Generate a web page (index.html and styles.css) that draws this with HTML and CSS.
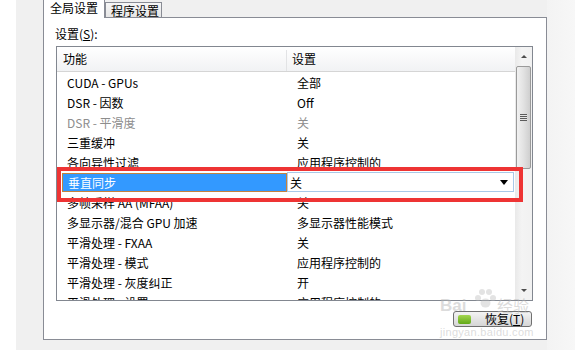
FILE: index.html
```html
<!DOCTYPE html>
<html>
    <head>
        <title>NVIDIA 控制面板 - 管理 3D 设置</title>
        <link rel="stylesheet" href="styles.css">
    </head>
    <body>
        <div class="screen">
            <div class="edge"></div>
            <div class="window">
                <div class="dialog">
                    <div class="tabs">
                        <div class="tab tab-on">全局设置</div>
                        <div class="tab tab-off">程序设置</div>
                    </div>
                    <div class="panel">
                        <p class="label">设置(<u>S</u>):</p>
                        <div class="listbox">
                            <div class="grid">
                                <div class="head">
                                    <div class="c1">功能</div>
                                    <div class="c2">设置</div>
                                </div>
                                <div class="row"><div class="c1">CUDA - GPUs</div><div class="c2">全部</div></div>
                                <div class="row"><div class="c1">DSR - 因数</div><div class="c2">Off</div></div>
                                <div class="row off"><div class="c1">DSR - 平滑度</div><div class="c2">关</div></div>
                                <div class="row"><div class="c1">三重缓冲</div><div class="c2">关</div></div>
                                <div class="row"><div class="c1">各向异性过滤</div><div class="c2">应用程序控制的</div></div>
                                <div class="row picked">
                                    <div class="c1"><span class="hl">垂直同步</span></div>
                                    <div class="c2"><span class="combo">关<i class="drop"></i></span></div>
                                </div>
                                <div class="row"><div class="c1">多帧采样 AA (MFAA)</div><div class="c2">关</div></div>
                                <div class="row"><div class="c1">多显示器/混合 GPU 加速</div><div class="c2">多显示器性能模式</div></div>
                                <div class="row"><div class="c1">平滑处理 - FXAA</div><div class="c2">关</div></div>
                                <div class="row"><div class="c1">平滑处理 - 模式</div><div class="c2">应用程序控制的</div></div>
                                <div class="row"><div class="c1">平滑处理 - 灰度纠正</div><div class="c2">开</div></div>
                                <div class="row"><div class="c1">平滑处理 - 设置</div><div class="c2">应用程序控制的</div></div>
                            </div>
                            <div class="vscroll">
                                <div class="sbtn"><i class="up"></i></div>
                                <div class="thumb"><span class="grip"></span></div>
                                <div class="track"></div>
                                <div class="sbtn"><i class="down"></i></div>
                            </div>
                            <div class="mark"></div>
                        </div>
                        <div class="actions">
                            <button class="restore"><span class="nv"></span>恢复(<u>T</u>)</button>
                        </div>
                        <div class="watermark">
                            <span class="wm-bai">Bai</span>
                            <svg class="wm-paw" width="24" height="20" viewBox="0 0 24 20">
                                <circle cx="5" cy="9" r="3"/>
                                <circle cx="9" cy="3" r="3"/>
                                <circle cx="16" cy="3" r="3"/>
                                <circle cx="20" cy="9" r="3"/>
                                <ellipse cx="12.5" cy="14" rx="5" ry="4.5"/>
                            </svg>
                            <span class="wm-jy">经验</span>
                            <span class="wm-url">jingyan.baidu.com</span>
                        </div>
                    </div>
                </div>
                <div class="side"></div>
            </div>
        </div>
    </body>
</html>
```

FILE: styles.css
```css
body {
    margin: 0;
    font-family: "Noto Sans CJK SC", "Liberation Sans", sans-serif;
    font-size: 12px;
    color: #000;
}

.screen {
    display: flex;
    width: 575px;
    height: 350px;
    overflow: hidden;
    background: #f0f0f0;
}

.edge {
    width: 16px;
    background: #fff;
}

.window {
    flex: 1;
    display: flex;
    padding-left: 27px;
    background: #f0f0f0;
}

.dialog {
    width: 504px;
}

.side {
    flex: 1;
    background: linear-gradient(90deg, #f3f3f3, #f7f7f7);
}

/* tabs */
.tabs {
    display: flex;
    align-items: flex-end;
    height: 17px;
}

.tab {
    box-sizing: border-box;
    white-space: nowrap;
}

.tab-on {
    position: relative;
    z-index: 1;
    width: 62px;
    height: 18px;
    margin-bottom: -1px;
    padding-left: 6px;
    line-height: 16px;
    background: #fff;
    border-left: 1px solid #898c95;
    border-right: 1px solid #898c95;
}

.tab-off {
    width: 57px;
    height: 15px;
    padding-left: 5px;
    line-height: 15px;
    background: linear-gradient(#f6f6f6, #e6e6e6);
    border: 1px solid #898c95;
    border-bottom: none;
}

/* panel */
.panel {
    position: relative;
    box-sizing: border-box;
    height: 323px;
    padding: 9px 13px 0 12px;
    background: #fff;
    border: 1px solid #898c95;
}

.label {
    margin: 0 0 5px -1px;
    height: 14px;
    line-height: 14px;
}

.listbox {
    position: relative;
    display: flex;
    box-sizing: border-box;
    width: 477px;
    height: 255px;
    border: 1px solid #828790;
    overflow: hidden;
}

.grid {
    flex: 1;
    overflow: hidden;
}

.head {
    display: flex;
    box-sizing: border-box;
    height: 25px;
    padding-top: 3px;
    background: linear-gradient(#ffffff, #f1f2f4);
    border-bottom: 1px solid #d5d5d5;
}

.head .c1 {
    padding-left: 6px;
    border-right: 1px solid #e2e3e5;
}

.head .c2 {
    padding-left: 5px;
}

.c1 {
    box-sizing: border-box;
    width: 230px;
    padding-left: 10px;
    white-space: nowrap;
}

.c2 {
    flex: 1;
    padding-left: 10px;
    white-space: nowrap;
}

.row {
    display: flex;
    align-items: center;
    height: 20px;
}

.off {
    color: #8d8d8d;
}

.picked .c1 {
    padding-left: 5px;
}

.picked .c2 {
    padding-left: 0;
}

.hl {
    display: block;
    box-sizing: border-box;
    height: 19px;
    padding-left: 5px;
    line-height: 17px;
    color: #fff;
    background: #3399ff;
    border: 1px solid #c4823f;
}

.combo {
    display: flex;
    align-items: center;
    justify-content: space-between;
    box-sizing: border-box;
    width: 227px;
    height: 20px;
    padding: 0 5px 0 2px;
    background: #fff;
    border: 1px solid #a9c9e8;
}

.drop {
    width: 0;
    height: 0;
    border-left: 4px solid transparent;
    border-right: 4px solid transparent;
    border-top: 5px solid #000;
}

/* scrollbar */
.vscroll {
    display: flex;
    flex-direction: column;
    width: 17px;
    background: linear-gradient(90deg, #e9e9e9, #f4f4f4 40%, #f1f1f1);
}

.sbtn {
    display: flex;
    align-items: center;
    justify-content: center;
    height: 19px;
}

.up,
.down {
    width: 0;
    height: 0;
    border-left: 3px solid transparent;
    border-right: 3px solid transparent;
}

.up {
    border-bottom: 3px solid #4d4d4d;
}

.down {
    border-top: 3px solid #4d4d4d;
}

.thumb {
    display: flex;
    align-items: center;
    justify-content: center;
    box-sizing: border-box;
    height: 103px;
    margin: 0 1px;
    background: linear-gradient(90deg, #f1f1f1, #e2e2e2 50%, #cfcfcf);
    border: 1px solid #9a9a9a;
    border-radius: 2px;
}

.grip {
    width: 7px;
    height: 7px;
    background: repeating-linear-gradient(#5c5c5c 0 1px, #e6e6e6 1px 2px);
}

.track {
    flex: 1;
}

/* annotation */
.mark {
    position: absolute;
    left: 0;
    top: 120px;
    box-sizing: border-box;
    width: 466px;
    height: 35px;
    border: 4px solid #ee3434;
}

/* button */
.actions {
    display: flex;
    justify-content: flex-end;
    margin-top: 10px;
    padding-right: 1px;
}

.restore {
    display: flex;
    align-items: center;
    box-sizing: border-box;
    width: 79px;
    height: 16px;
    padding: 0 0 0 4px;
    font-family: inherit;
    font-size: 12px;
    line-height: 12px;
    color: #000;
    background: linear-gradient(#f4f4f4, #e4e4e4 50%, #d6d6d6);
    border: 1px solid #707070;
    border-radius: 3px;
}

.nv {
    width: 13px;
    height: 9px;
    margin-right: 14px;
    background: linear-gradient(#a4d650, #62a918);
    border-radius: 2px;
}

/* watermark */
.watermark {
    position: absolute;
    left: 396px;
    top: 270px;
    width: 108px;
    height: 50px;
    color: rgba(185, 185, 185, 0.5);
    pointer-events: none;
}

.wm-bai {
    position: absolute;
    left: 0;
    top: 13px;
    font-family: "Liberation Sans", sans-serif;
    font-size: 17px;
    font-weight: bold;
    line-height: 10px;
}

.wm-paw {
    position: absolute;
    left: 33px;
    top: 1px;
    fill: rgba(185, 185, 185, 0.4);
}

.wm-jy {
    position: absolute;
    left: 57px;
    top: 12px;
    font-size: 16px;
    line-height: 10px;
}

.wm-url {
    position: absolute;
    left: 0;
    top: 40px;
    font-family: "Liberation Sans", sans-serif;
    font-size: 11px;
    line-height: 8px;
    letter-spacing: 0.3px;
}
```
